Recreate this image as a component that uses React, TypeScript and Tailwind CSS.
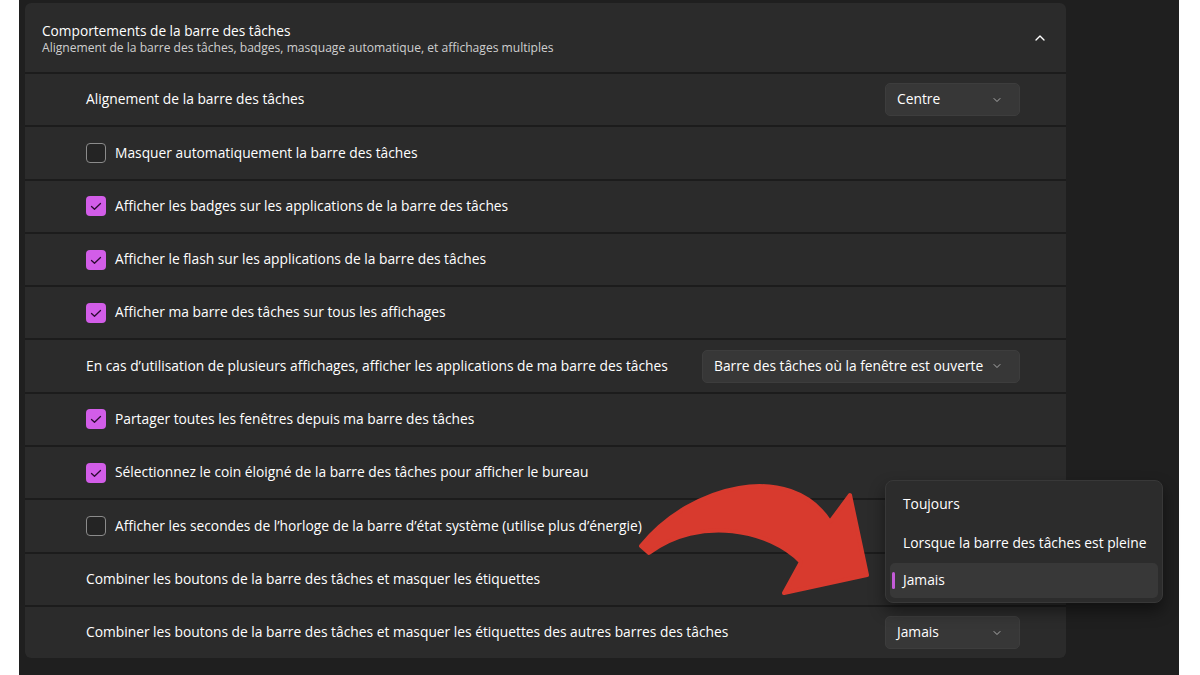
import { ChevronDown, ChevronUp } from 'lucide-react';

type Row =
  | { kind: 'label'; text: string; select?: { value: string; width: string } }
  | { kind: 'check'; text: string; checked: boolean };

const ROWS: Row[] = [
  { kind: 'label', text: 'Alignement de la barre des tâches', select: { value: 'Centre', width: 'w-[135px]' } },
  { kind: 'check', text: 'Masquer automatiquement la barre des tâches', checked: false },
  { kind: 'check', text: 'Afficher les badges sur les applications de la barre des tâches', checked: true },
  { kind: 'check', text: 'Afficher le flash sur les applications de la barre des tâches', checked: true },
  { kind: 'check', text: 'Afficher ma barre des tâches sur tous les affichages', checked: true },
  {
    kind: 'label',
    text: 'En cas d’utilisation de plusieurs affichages, afficher les applications de ma barre des tâches',
    select: { value: 'Barre des tâches où la fenêtre est ouverte', width: 'w-[318px]' },
  },
  { kind: 'check', text: 'Partager toutes les fenêtres depuis ma barre des tâches', checked: true },
  { kind: 'check', text: 'Sélectionnez le coin éloigné de la barre des tâches pour afficher le bureau', checked: true },
  { kind: 'check', text: 'Afficher les secondes de l’horloge de la barre d’état système (utilise plus d’énergie)', checked: false },
  { kind: 'label', text: 'Combiner les boutons de la barre des tâches et masquer les étiquettes' },
  {
    kind: 'label',
    text: 'Combiner les boutons de la barre des tâches et masquer les étiquettes des autres barres des tâches',
    select: { value: 'Jamais', width: 'w-[135px]' },
  },
];

function Checkbox({ checked }: { checked: boolean }) {
  if (!checked) {
    return <div className="w-[20px] h-[20px] rounded-[4px] border border-[#8b8b8b] bg-[#242424] flex-shrink-0" />;
  }
  return (
    <div className="w-[20px] h-[20px] rounded-[4px] bg-[#d25de8] flex items-center justify-center flex-shrink-0">
      <svg width="20" height="20" viewBox="0 0 20 20" fill="none">
        <path d="M5.5 10.5 L8.5 13.3 L14.5 7.5" stroke="#2b0a31" strokeWidth="1.3" strokeLinecap="round" strokeLinejoin="round" />
      </svg>
    </div>
  );
}

function Select({ value, width }: { value: string; width: string }) {
  return (
    <div className={`${width} h-[33px] rounded-[5px] bg-[#373737] border border-[#3d3d3d] flex items-center justify-between pl-[11px] pr-[16px]`}>
      <span className="text-[13.8px] text-white">{value}</span>
      <ChevronDown className="w-[12px] h-[12px] text-[#c8c8c8]" strokeWidth={1.6} />
    </div>
  );
}

export default function App() {
  return (
    <div className="w-[1200px] h-[675px] bg-white flex overflow-hidden" style={{ fontFamily: '"Segoe UI", "Open Sans", "Noto Sans", sans-serif' }}>
      <div className="ml-[19px] w-[1160px] h-full bg-[#1f1f1f] relative pt-[3px] pl-[6px]">
        <div className="w-[1041px] rounded-[6px] bg-[#1c1c1c] flex flex-col gap-[2px] overflow-hidden">
          {/* Header */}
          <div className="h-[69px] bg-[#2b2b2b] flex items-center justify-between pl-[17px] pr-[18px]">
            <div className="flex flex-col pt-[2px]">
              <span className="text-[13.7px] text-white leading-[19px]">Comportements de la barre des tâches</span>
              <span className="text-[12.1px] text-[#cfcfcf] leading-[16px]">
                Alignement de la barre des tâches, badges, masquage automatique, et affichages multiples
              </span>
            </div>
            <ChevronUp className="w-[16px] h-[16px] text-white" strokeWidth={2} />
          </div>

          {ROWS.map((row, i) => (
            <div key={i} className="h-[51.3px] bg-[#2b2b2b] flex items-center justify-between pl-[61px] pr-[46px]">
              {row.kind === 'check' ? (
                <div className="flex items-center gap-[9px]">
                  <Checkbox checked={row.checked} />
                  <span className="text-[13.8px] text-white">{row.text}</span>
                </div>
              ) : (
                <>
                  <span className="text-[13.8px] text-white">{row.text}</span>
                  {row.select && <Select value={row.select.value} width={row.select.width} />}
                </>
              )}
            </div>
          ))}
        </div>

        {/* Red arrow */}
        <svg
          className="absolute left-[611px] top-[480px] pointer-events-none"
          width="260"
          height="125"
          viewBox="630 480 260 125"
        >
          <path
            d="M641 546 C690 485 790 460 830 522 L850 495 L867 575 L784 593 L801 562 C770 530 700 515 649 553 Z"
            fill="#d83a2e"
            stroke="#d83a2e"
            strokeWidth="4"
            strokeLinejoin="round"
          />
        </svg>

        {/* Popup menu */}
        <div className="absolute left-[866px] top-[480px] w-[278px] h-[123px] rounded-[8px] bg-[#2c2c2c] border border-[#383838] shadow-[0_8px_16px_rgba(0,0,0,0.45)] flex flex-col px-[4px] pt-[4px]">
          <div className="h-[38px] flex items-center pl-[13px] text-[13.8px] text-white">Toujours</div>
          <div className="h-[40px] flex items-center pl-[13px] text-[13.8px] text-white">Lorsque la barre des tâches est pleine</div>
          <div className="h-[35px] rounded-[5px] bg-[#383838] flex items-center relative pl-[13px] text-[13.8px] text-white">
            <div className="absolute left-[2px] top-[9px] w-[3px] h-[17px] rounded-full bg-[#c45bd8]" />
            Jamais
          </div>
        </div>
      </div>
    </div>
  );
}
